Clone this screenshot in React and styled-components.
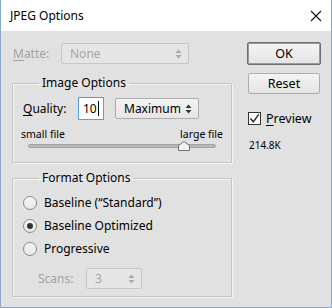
import React from "react";
import styled, { createGlobalStyle } from "styled-components";

const Global = createGlobalStyle`
  html, body { margin: 0; padding: 0; background: #fff; }
  * { box-sizing: border-box; }
  body { font-family: "Noto Sans", "Segoe UI", sans-serif; font-size: 12px; color: #000; }
`;

const Window = styled.div`
  width: 332px;
  height: 308px;
  display: flex;
  flex-direction: column;
  border: 1px solid #8ca6c6;
  border-top: none;
  background: #e1e1e1;
`;

const TitleBar = styled.div`
  height: 31px;
  flex: none;
  background: #fff;
  display: flex;
  align-items: center;
  justify-content: space-between;
  padding: 0 9px 0 9px;
  font-size: 12px;
`;

const Body = styled.div`
  flex: 1;
  display: flex;
  gap: 15px;
  padding: 12px 0 0 11px;
`;

const LeftCol = styled.div`
  width: 220px;
  display: flex;
  flex-direction: column;
`;

const RightCol = styled.div`
  width: 74px;
  display: flex;
  flex-direction: column;
`;

const Row = styled.div`
  display: flex;
  align-items: center;
  height: ${(p) => p.$h || 21}px;
  margin-top: ${(p) => p.$mt || 0}px;
  padding-left: ${(p) => p.$pl || 0}px;
`;

const Label = styled.span`
  width: ${(p) => p.$w}px;
  flex: none;
  color: ${(p) => (p.$disabled ? "#a3a3a3" : "#000")};
  white-space: nowrap;
`;

const U = styled.span`
  text-decoration: underline;
  text-underline-offset: 2px;
`;

const Select = styled.div`
  width: ${(p) => p.$w}px;
  height: ${(p) => p.$h || 21}px;
  margin-left: ${(p) => p.$ml || 0}px;
  display: flex;
  align-items: center;
  justify-content: space-between;
  padding: 0 6px 0 ${(p) => p.$pad || 8}px;
  border: 1px solid ${(p) => (p.$disabled ? "#c6c6c6" : "#acacac")};
  border-radius: 2px;
  background: ${(p) =>
    p.$disabled ? "#e5e5e5" : "linear-gradient(#f3f3f3, #e6e6e6)"};
  color: ${(p) => (p.$disabled ? "#a6a6a6" : "#000")};
`;

const Group = styled.fieldset`
  margin: ${(p) => p.$mt}px 0 0 0;
  padding: ${(p) => p.$pt}px 10px ${(p) => p.$pb}px 10px;
  border: 1px solid #c4c4c4;
  box-shadow: inset 1px 1px 0 #f4f4f4, 1px 1px 0 #f4f4f4;
  border-radius: 0;
  min-width: 0;
`;

const Legend = styled.legend`
  margin-left: 16px;
  padding: 0 3px;
  font-size: 12px;
  line-height: 16px;
`;

const TextInput = styled.div`
  width: 26px;
  height: 23px;
  margin-left: 1px;
  border: 1px solid #5b9de0;
  background: #fff;
  display: flex;
  align-items: center;
  padding-left: 4px;
`;

const Caret = styled.span`
  display: inline-block;
  width: 1px;
  height: 15px;
  background: #000;
  margin-left: 1px;
`;

const ScaleLabels = styled.div`
  display: flex;
  justify-content: space-between;
  font-size: 10.5px;
  line-height: 14px;
  margin: 7px -2px 0 -2px;
`;

const Track = styled.div`
  position: relative;
  height: 10px;
  margin: 0 5px;
  display: flex;
  align-items: center;
`;

const TrackLine = styled.div`
  flex: 1;
  height: 4px;
  border-radius: 2px;
  background: #b8b8b8;
  border: 1px solid #a2a2a2;
`;

const Thumb = styled.svg`
  position: absolute;
  left: 150px;
  top: 0;
`;

const RadioRow = styled.div`
  display: flex;
  align-items: center;
  height: 23px;
  gap: 7px;
`;

const Radio = styled.span`
  width: 14px;
  height: 14px;
  border-radius: 50%;
  border: 1px solid #8a8a8a;
  background: linear-gradient(#f6f6f6, #e8e8e8);
  display: flex;
  align-items: center;
  justify-content: center;
  &::after {
    content: "";
    width: 6px;
    height: 6px;
    border-radius: 50%;
    background: ${(p) => (p.$on ? "#333" : "transparent")};
  }
`;

const Button = styled.div`
  height: ${(p) => (p.$default ? 23 : 21)}px;
  width: ${(p) => (p.$default ? 74 : 72)}px;
  margin: ${(p) => p.$mt}px 0 0 ${(p) => (p.$default ? 0 : 1)}px;
  display: flex;
  align-items: center;
  justify-content: center;
  border: 1px solid ${(p) => (p.$default ? "#6e6e6e" : "#adadad")};
  box-shadow: ${(p) => (p.$default ? "inset 0 0 0 1px #9a9a9a" : "none")};
  border-radius: 2px;
  background: linear-gradient(#f4f4f4, #e4e4e4);
  font-size: 12.5px;
`;

const CheckRow = styled.div`
  display: flex;
  align-items: center;
  gap: 5px;
  margin-top: 16px;
  margin-left: 1px;
  font-size: 12.5px;
`;

const Box = styled.span`
  width: 13px;
  height: 13px;
  border: 1px solid #333;
  background: #fff;
  display: flex;
  align-items: center;
  justify-content: center;
`;

const Size = styled.div`
  margin-top: 11px;
  margin-left: 2px;
  font-size: 10px;
`;

function Arrows({ color }) {
  return (
    <svg width="7" height="10" viewBox="0 0 7 10">
      <path d="M3.5 0.5 L6.5 4 L0.5 4 Z M0.5 6 L6.5 6 L3.5 9.5 Z" fill={color} />
    </svg>
  );
}

export default function App() {
  return (
    <>
      <Global />
      <Window>
        <TitleBar>
          <span>JPEG Options</span>
          <svg width="12" height="12" viewBox="0 0 12 12">
            <path d="M1 1 L11 11 M11 1 L1 11" stroke="#111" strokeWidth="1.1" />
          </svg>
        </TitleBar>
        <Body>
          <LeftCol>
            <Row $pl={1}>
              <Label $w={48} $disabled>
                <U>M</U>atte:
              </Label>
              <Select $w={128} $disabled>
                <span>None</span>
                <Arrows color="#a8a8a8" />
              </Select>
            </Row>
            <Group $mt={11} $pt={6} $pb={11}>
              <Legend>Image Options</Legend>
              <Row $h={23}>
                <Label $w={54}>
                  <U>Q</U>uality:
                </Label>
                <TextInput>
                  10
                  <Caret />
                </TextInput>
                <Select $w={84} $h={21} $ml={11}>
                  <span>Maximum</span>
                  <Arrows color="#333" />
                </Select>
              </Row>
              <ScaleLabels>
                <span>small file</span>
                <span>large file</span>
              </ScaleLabels>
              <Track>
                <TrackLine />
                <Thumb width="12" height="10" viewBox="0 0 12 10">
                  <path
                    d="M6 0.5 L11.5 4.5 L11.5 9.5 L0.5 9.5 L0.5 4.5 Z"
                    fill="#f2f2f2"
                    stroke="#6f6f6f"
                  />
                </Thumb>
              </Track>
            </Group>
            <Group $mt={7} $pt={5} $pb={7}>
              <Legend>Format Options</Legend>
              <RadioRow>
                <Radio />
                <span>Baseline (“Standard”)</span>
              </RadioRow>
              <RadioRow>
                <Radio $on />
                <span>Baseline Optimized</span>
              </RadioRow>
              <RadioRow>
                <Radio />
                <span>Progressive</span>
              </RadioRow>
              <Row $mt={8} $pl={15}>
                <Label $w={48} $disabled>
                  Scans:
                </Label>
                <Select $w={56} $disabled $pad={8}>
                  <span>3</span>
                  <Arrows color="#a8a8a8" />
                </Select>
              </Row>
            </Group>
          </LeftCol>
          <RightCol>
            <Button $default $mt={-1}>
              OK
            </Button>
            <Button $mt={8}>Reset</Button>
            <CheckRow>
              <Box>
                <svg width="11" height="11" viewBox="0 0 11 11">
                  <path d="M1.5 5.5 L4.3 8.8 L9.8 1.3" stroke="#222" strokeWidth="1.4" fill="none" />
                </svg>
              </Box>
              <span>
                <U>P</U>review
              </span>
            </CheckRow>
            <Size>214.8K</Size>
          </RightCol>
        </Body>
      </Window>
    </>
  );
}
